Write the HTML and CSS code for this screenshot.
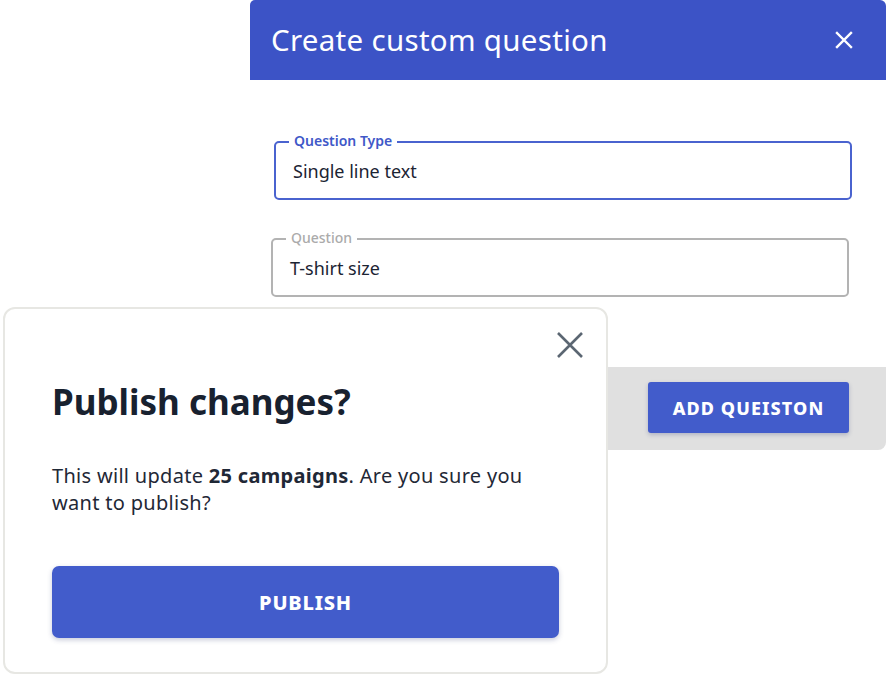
FILE: index.html
```html
<!DOCTYPE html>
<html>
<head>
<meta charset="utf-8">
<link rel="stylesheet" href="styles.css">
</head>
<body>
<div class="stage">
  <section class="panel">
    <header class="panel-head">
      <h1 class="panel-title">Create custom question</h1>
      <svg class="panel-close" width="18" height="18" viewBox="0 0 18 18"><path d="M2 2L16 16M16 2L2 16" stroke="#fff" stroke-width="2.4" stroke-linecap="square"/></svg>
    </header>
    <div class="panel-body">
      <div class="field field-active">
        <span class="field-label">Question Type</span>
        <span class="field-value">Single line text</span>
      </div>
      <div class="field field-idle">
        <span class="field-label">Question</span>
        <span class="field-value">T-shirt size</span>
      </div>
    </div>
    <footer class="panel-foot">
      <button class="btn btn-add">ADD QUEISTON</button>
    </footer>
  </section>

  <div class="dialog">
    <div class="dialog-top">
      <svg class="dialog-close" width="28" height="28" viewBox="0 0 28 28"><path d="M2 2L26 26M26 2L2 26" stroke="#5b6672" stroke-width="2.6"/></svg>
    </div>
    <h2 class="dialog-title">Publish changes?</h2>
    <p class="dialog-text">This will update <strong>25 campaigns</strong>. Are you sure you want to publish?</p>
    <button class="btn btn-publish">PUBLISH</button>
  </div>
</div>
</body>
</html>
```
FILE: styles.css
```css
* { box-sizing: border-box; }
html, body { margin: 0; padding: 0; background: #fff; }
body { font-family: "Noto Sans", "Open Sans", sans-serif; }
.stage { position: relative; width: 886px; height: 676px; overflow: hidden; }

.panel { margin-left: 250px; width: 636px; background: #fff; border-radius: 5px 6px 8px 0; }
.panel-head { height: 80px; background: #3c53c6; border-radius: 5px 6px 0 0; display: flex; align-items: center; justify-content: space-between; padding: 0 33px 0 21px; }
.panel-title { margin: 0; color: #fff; font-weight: 400; font-size: 29.5px; letter-spacing: 0.3px; padding-bottom: 1px; }
.panel-close { display: block; margin-top: 0; }

.panel-body { padding: 61px 0 0 0; display: flex; flex-direction: column; }
.field { position: relative; height: 59px; width: 578px; border-radius: 5px; display: flex; align-items: center; padding: 0 17px; }
.field-active { margin-left: 24px; border: 2px solid #4a63cf; }
.field-idle { margin-left: 21px; margin-top: 38px; border: 2px solid #b3b3b3; }
.field-label { position: absolute; top: -10px; left: 13px; background: #fff; padding: 0 5px; font-size: 14px; line-height: 16px; font-weight: 600; }
.field-active .field-label { color: #4058c8; }
.field-idle .field-label { color: #ababab; font-weight: 500; }
.field-value { font-size: 18px; color: #1c2433; padding-top: 0; }

.panel-foot { margin-top: 70px; height: 83px; background: #e0e0e0; border-radius: 0 0 8px 0; display: flex; align-items: center; justify-content: flex-end; padding: 0 37px 2px 0; }
.btn { font-family: inherit; border: none; color: #fff; font-weight: 800; cursor: pointer; }
.btn-add { width: 201px; height: 51px; background: #425ccb; border-radius: 3px; font-size: 18px; letter-spacing: 1.1px; box-shadow: 0 2px 4px rgba(40,50,110,0.25); }

.dialog { position: absolute; left: 3px; top: 307px; width: 605px; height: 367px; background: #fff; border: 2px solid #e7e7e3; border-radius: 12px; padding: 22px 22px 0 47px; }
.dialog-top { display: flex; justify-content: flex-end; }
.dialog-close { display: block; }
.dialog-title { margin: 21px 0 0 0; font-size: 35px; line-height: 44px; font-weight: 700; color: #18212f; }
.dialog-text { margin: 38px 0 0 0; font-size: 20px; line-height: 27px; letter-spacing: 0.3px; color: #1f2836; width: 490px; }
.dialog-text strong { font-weight: 700; }
.btn-publish { display: block; margin-top: 50px; width: 507px; height: 72px; background: #425ccb; border-radius: 7px; font-size: 20px; letter-spacing: 0.8px; box-shadow: 0 2px 5px rgba(40,50,110,0.25); }
```
